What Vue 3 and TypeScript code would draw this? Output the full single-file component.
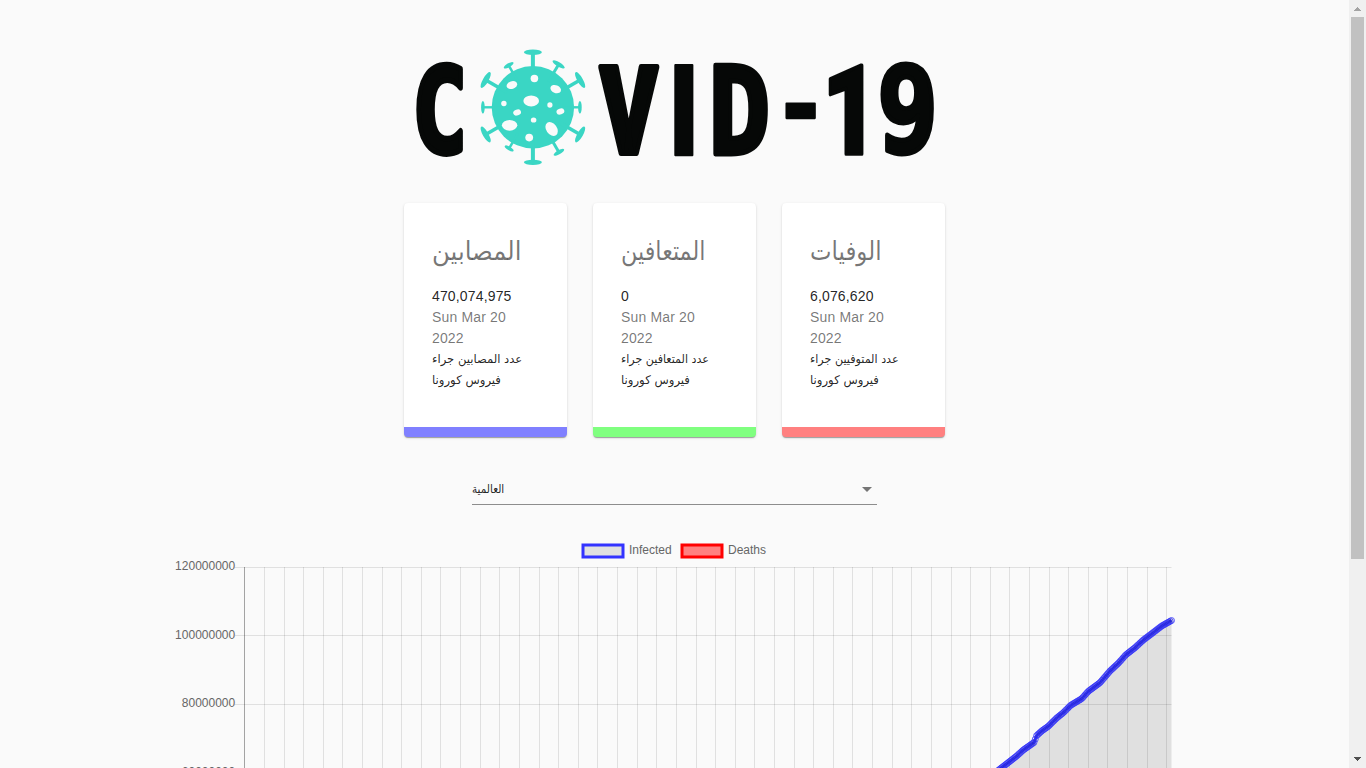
<script setup lang="ts">
interface Card {
  title: string
  titleScale: number
  value: string
  lines: { text: string; scale: number }[]
  tone: string
}

const cards: Card[] = [
  {
    title: 'المصابين',
    titleScale: 0.937,
    value: '470,074,975',
    lines: [{ text: 'عدد المصابين جراء', scale: 0.965 }, { text: 'فيروس كورونا', scale: 0.975 }],
    tone: 'infected',
  },
  {
    title: 'المتعافين',
    titleScale: 0.857,
    value: '0',
    lines: [{ text: 'عدد المتعافين جراء', scale: 0.926 }, { text: 'فيروس كورونا', scale: 0.975 }],
    tone: 'recovered',
  },
  {
    title: 'الوفيات',
    titleScale: 0.88,
    value: '6,076,620',
    lines: [{ text: 'عدد المتوفيين جراء', scale: 0.93 }, { text: 'فيروس كورونا', scale: 0.975 }],
    tone: 'deaths',
  },
]

const measure = document.createElement('canvas').getContext('2d')!

/* Wordmark: every character is scaled so that its stroked ink fills the given box. */
interface Mark {
  char: string
  x: number
  y: number
  w: number
  h: number
  stroke: number
  weight: number
  family: string
}
const mono = 'DejaVu Sans Mono'
const sans = 'Roboto'
const marks: Mark[] = [
  { char: 'C', x: 16, y: 21.5, w: 47.2, h: 95, stroke: 5, weight: 700, family: mono },
  { char: 'V', x: 197.5, y: 22.5, w: 62.5, h: 93.5, stroke: 5, weight: 900, family: sans },
  { char: 'I', x: 273.7, y: 22.5, w: 20, h: 93.5, stroke: 2, weight: 900, family: sans },
  { char: 'D', x: 312.7, y: 22.5, w: 55.5, h: 93.5, stroke: 4, weight: 700, family: mono },
  { char: '-', x: 385, y: 62.5, w: 31, h: 17, stroke: 2, weight: 900, family: sans },
  { char: '1', x: 428.5, y: 22.5, w: 35, h: 93.5, stroke: 3, weight: 900, family: sans },
  { char: '9', x: 480, y: 21.5, w: 54, h: 95, stroke: 4, weight: 700, family: mono },
]
const glyphs = marks.map((m) => {
  measure.font = `${m.weight} 100px "${m.family}"`
  const t = measure.measureText(m.char)
  const inkW = t.actualBoundingBoxRight + t.actualBoundingBoxLeft
  const inkH = t.actualBoundingBoxAscent + t.actualBoundingBoxDescent
  const sx = m.w / (inkW + m.stroke)
  const sy = m.h / (inkH + m.stroke)
  const tx = m.x + (m.stroke / 2 + t.actualBoundingBoxLeft) * sx
  const ty = m.y + (m.stroke / 2 + t.actualBoundingBoxAscent) * sy
  return { ...m, transform: `matrix(${sx} 0 0 ${sy} ${tx} ${ty})` }
})

/* Virus spikes: angle, cap distance from the centre, half width of the cap, half thickness, stem width */
const spikes = [
  { a: 0, d: 55, w: 9, t: 2.8, s: 4 },
  { a: 31, d: 50, w: 7, t: 2.2, s: 3 },
  { a: 60, d: 54.5, w: 9, t: 2.8, s: 3.6 },
  { a: 90, d: 47, w: 6.3, t: 1.8, s: 2.4 },
  { a: 120, d: 54.5, w: 9, t: 2.8, s: 3.6 },
  { a: 150, d: 52, w: 6, t: 2, s: 3 },
  { a: 180, d: 55, w: 9, t: 2.6, s: 4 },
  { a: 210, d: 47.5, w: 5, t: 1.8, s: 2.5 },
  { a: 240, d: 54.5, w: 9, t: 2.8, s: 3.6 },
  { a: 270, d: 50, w: 6.3, t: 1.8, s: 2.4 },
  { a: 330, d: 48.5, w: 5.5, t: 2, s: 2.5 },
  { a: 300, d: 54.5, w: 9, t: 2.8, s: 3.6 },
]
const spots = [
  { x: 1.5, y: -28.8, rx: 3.8, ry: 3.7, r: 0 },
  { x: -21, y: -22.2, rx: 5.4, ry: 3.8, r: -18 },
  { x: 22.8, y: -18.2, rx: 5.5, ry: 3.9, r: 22 },
  { x: -1.7, y: -6.4, rx: 7.8, ry: 5.5, r: 0 },
  { x: -29, y: -3.8, rx: 2.7, ry: 2.7, r: 0 },
  { x: 17, y: -2.3, rx: 2.6, ry: 2.8, r: 0 },
  { x: -15.8, y: 5.2, rx: 4, ry: 2.9, r: -20 },
  { x: 27.5, y: 4.2, rx: 4, ry: 2.9, r: -18 },
  { x: 0.7, y: 12.7, rx: 2.8, ry: 2.6, r: 0 },
  { x: -23.3, y: 18, rx: 7.7, ry: 5.4, r: 0 },
  { x: 18.7, y: 21.7, rx: 5.4, ry: 7.6, r: -35 },
  { x: -3.7, y: 30.3, rx: 3.9, ry: 3.8, r: 0 },
]

/* Chart geometry, in chart-local pixels */
const gridX = Array.from({ length: 48 }, (_, i) => Math.round(74.32 + i * 19.617) + 0.5)
const rows = [
  { y: 27.5, label: '120000000', base: 30 },
  { y: 95.5, label: '100000000', base: 99 },
  { y: 164.5, label: '80000000', base: 167 },
  { y: 232.5, label: '60000000', base: 236 },
]

const trend: [number, number][] = [
  [825, 233], [830, 229], [838, 222.8], [846.7, 216], [853.3, 210], [860, 205.3], [864.6, 202],
  [866, 196.2], [871.7, 191], [878.3, 186.3], [886.7, 178], [893.3, 172.7], [900.7, 165.3],
  [911.7, 158.7], [918.3, 151.3], [930, 142.7], [940, 131], [948.3, 123.3], [956, 114.7],
  [965, 107.7], [973.3, 100], [981.7, 93.7], [991.7, 86], [1001.5, 80.5],
]
const points: { x: number; y: number }[] = []
for (let x = 1001.5; x >= 825; x -= 1.31) {
  const i = trend.findIndex((p, n) => n < trend.length - 1 && p[0] <= x && trend[n + 1][0] >= x)
  const [x0, y0] = trend[i]
  const [x1, y1] = trend[i + 1]
  points.unshift({ x, y: y0 + ((y1 - y0) * (x - x0)) / (x1 - x0) })
}
const line = points.map((p) => `${p.x.toFixed(2)},${p.y.toFixed(2)}`).join(' ')
const area = `${points[0].x},240 ${line} 1001.5,240`
</script>

<template>
  <div class="window">
    <main class="page">
      <svg class="logo" width="550" height="130" viewBox="0 0 550 130">
        <g class="virus" transform="translate(132.9 67.3)">
          <circle r="41.2" />
          <g v-for="s in spikes" :key="s.a" :transform="`rotate(${s.a})`">
            <rect :x="-s.s / 2" :y="-s.d" :width="s.s" :height="s.d - 30" />
            <ellipse :cy="-s.d" :rx="s.w" :ry="s.t" />
          </g>
          <ellipse
            v-for="(s, i) in spots"
            :key="i"
            class="spot"
            :rx="s.rx"
            :ry="s.ry"
            :transform="`translate(${s.x} ${s.y}) rotate(${s.r})`"
          />
        </g>
        <text
          v-for="g in glyphs"
          :key="g.char"
          class="mark"
          :font-family="g.family"
          :font-weight="g.weight"
          :stroke-width="g.stroke"
          :transform="g.transform"
        >{{ g.char }}</text>
      </svg>

      <section class="cards">
        <article v-for="c in cards" :key="c.tone" class="card" :class="c.tone">
          <h2 class="title" :style="{ transform: `scaleX(${c.titleScale})` }">{{ c.title }}</h2>
          <div class="value">{{ c.value }}</div>
          <div class="date">Sun Mar 20 2022</div>
          <div
            v-for="l in c.lines"
            :key="l.text"
            class="note"
            :style="{ transform: `scaleX(${l.scale})` }"
          >{{ l.text }}</div>
        </article>
      </section>

      <div class="select">
        <span class="choice">العالمية</span>
        <svg class="caret" width="24" height="24" viewBox="0 0 24 24"><path d="M7 10l5 5 5-5z" /></svg>
      </div>

      <svg class="chart" width="1010" height="240" viewBox="0 0 1010 240">
        <g class="legend">
          <rect x="413" y="5" width="40" height="12" class="box blue" />
          <text x="459" y="14">Infected</text>
          <rect x="512" y="5" width="40" height="12" class="box red" />
          <text x="558" y="14">Deaths</text>
        </g>
        <g class="grid">
          <line
            v-for="(x, i) in gridX"
            :key="x"
            :x1="x"
            :x2="x"
            y1="27"
            y2="240"
            :class="{ axis: i === 0 }"
          />
          <line v-for="r in rows" :key="r.y" x1="65" x2="1001.5" :y1="r.y" :y2="r.y" />
        </g>
        <text v-for="r in rows" :key="r.label" x="65.2" :y="r.base" text-anchor="end">{{ r.label }}</text>
        <polygon class="area" :points="area" />
        <polyline class="line" :points="line" />
        <circle v-for="p in points" :key="p.x" class="dot" :cx="p.x" :cy="p.y" r="3" />
      </svg>
    </main>

    <aside class="scrollbar">
      <svg width="17" height="17" viewBox="0 0 17 17" shape-rendering="crispEdges">
        <path class="up" d="M8 7h1v1h1v1h1v1h1v1H5v-1h1V9h1V8h1z" />
      </svg>
      <div class="thumb"></div>
      <svg class="bottom" width="17" height="17" viewBox="0 0 17 17" shape-rendering="crispEdges">
        <path class="down" d="M5 6h7v1h-1v1h-1v1H9v1H8V9H7V8H6V7H5z" />
      </svg>
    </aside>
  </div>
</template>

<style>
html,
body {
  margin: 0;
  overflow: hidden;
  background: #fafafa;
}
</style>

<style scoped>
.window {
  display: flex;
  width: 1366px;
  height: 768px;
  overflow: hidden;
  background: #fafafa;
  font-family: 'Liberation Sans', 'DejaVu Sans', sans-serif;
}
.page {
  display: flex;
  flex-direction: column;
  width: 1349px;
  height: 768px;
  overflow: hidden;
}
.logo {
  flex: none;
  display: block;
  margin: 40px 0 0 400px;
  overflow: visible;
}
.virus {
  fill: #3ad6c4;
}
.spot {
  fill: #fafafa;
}
.mark {
  font-size: 100px;
  fill: #060807;
  stroke: #060807;
  stroke-linejoin: round;
}
.cards {
  flex: none;
  display: flex;
  gap: 26px;
  margin: 33px 0 0 404px;
}
.card {
  box-sizing: border-box;
  width: 163px;
  height: 234px;
  padding: 28px 28px 0;
  background: #fff;
  border-radius: 4px;
  border-bottom: 10px solid;
  box-shadow: 0 2px 1px -1px rgba(0, 0, 0, 0.2), 0 1px 1px rgba(0, 0, 0, 0.14), 0 1px 3px rgba(0, 0, 0, 0.12);
  font-size: 14px;
  line-height: 21px;
  letter-spacing: 0.15px;
  color: rgba(0, 0, 0, 0.87);
}
.infected {
  border-bottom-color: #8080ff;
}
.recovered {
  border-bottom-color: #80ff80;
}
.deaths {
  border-bottom-color: #ff8080;
}
.title {
  margin: 0 0 15px;
  height: 40px;
  font: 400 26px/41px 'DejaVu Sans', sans-serif;
  letter-spacing: 0;
  color: rgba(0, 0, 0, 0.54);
  white-space: nowrap;
  transform-origin: left center;
}
.date {
  color: rgba(0, 0, 0, 0.54);
}
.note {
  font-family: 'DejaVu Sans', sans-serif;
  font-size: 12px;
  letter-spacing: 0;
  white-space: nowrap;
  transform-origin: left center;
}
.select {
  flex: none;
  box-sizing: border-box;
  display: flex;
  align-items: center;
  justify-content: space-between;
  width: 405px;
  height: 32px;
  margin: 36px 0 0 472px;
  border-bottom: 1px solid #8d8d8d;
}
.choice {
  font: 12px/20px 'DejaVu Sans', sans-serif;
  color: rgba(0, 0, 0, 0.87);
  transform: scaleX(0.87);
  transform-origin: left center;
}
.caret {
  fill: #757575;
  margin-right: -1.5px;
}
.chart {
  flex: none;
  display: block;
  margin: 35px 0 0 170px;
}
.chart text {
  font: 12px 'Liberation Sans', Arial, sans-serif;
  fill: #666;
}
.box {
  stroke-width: 3;
}
.blue {
  fill: rgba(0, 0, 0, 0.1);
  stroke: #3333ff;
}
.red {
  fill: #ff8080;
  stroke: #ff0000;
}
.grid line {
  stroke: rgba(0, 0, 0, 0.1);
  stroke-width: 1;
}
.grid .axis {
  stroke: rgba(0, 0, 0, 0.35);
}
.area {
  fill: rgba(0, 0, 0, 0.1);
}
.line {
  fill: none;
  stroke: #3333ff;
  stroke-width: 3;
}
.dot {
  fill: rgba(0, 0, 0, 0.06);
  stroke: rgba(51, 51, 255, 0.75);
  stroke-width: 1;
}
.scrollbar {
  display: flex;
  flex-direction: column;
  align-items: center;
  width: 17px;
  height: 768px;
  background: #f0f0f0;
}
.scrollbar svg {
  flex: none;
}
.thumb {
  width: 13px;
  height: 542px;
  background: #c1c1c1;
}
.bottom {
  margin-top: auto;
}
.up {
  fill: #a3a3a3;
}
.down {
  fill: #505050;
}
</style>
